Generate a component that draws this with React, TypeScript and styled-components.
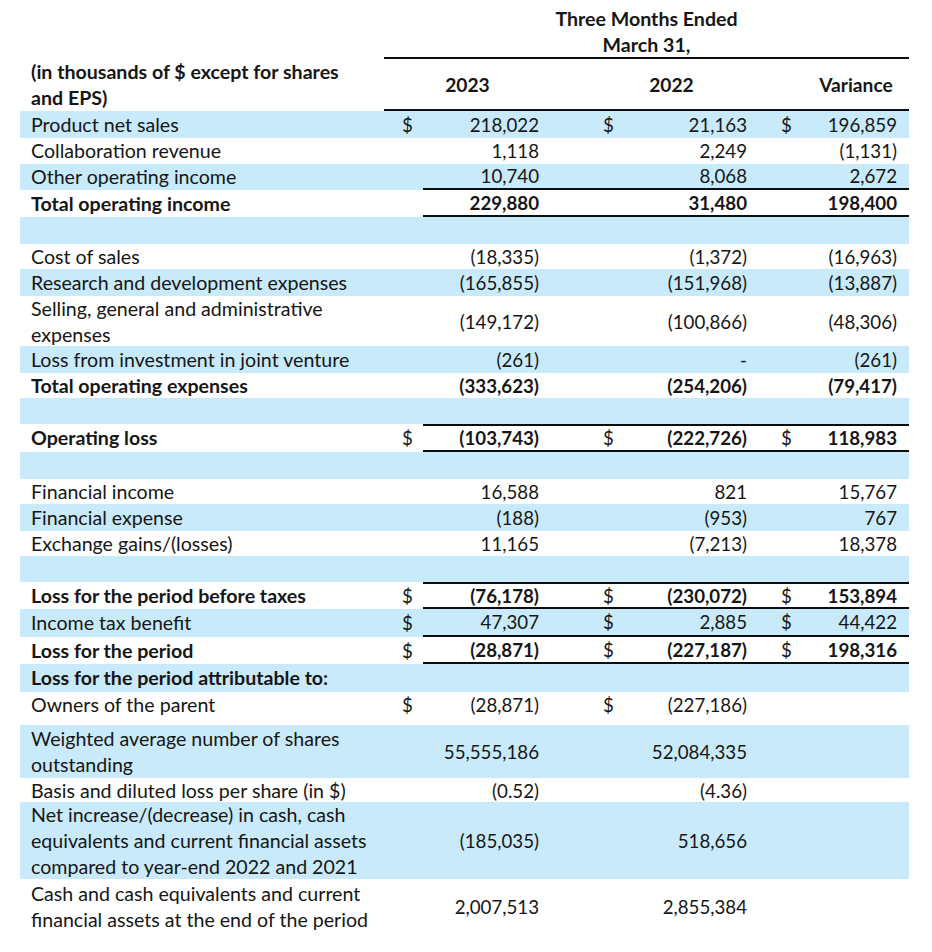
import React from "react";
import styled, { createGlobalStyle } from "styled-components";

const GlobalStyle = createGlobalStyle`
  html, body { margin: 0; padding: 0; background: #ffffff; }
  body {
    font-family: Lato, "Open Sans", "Liberation Sans", sans-serif;
    font-size: 19.6px;
    color: #161616;
  }
`;

const BLUE = "#c8eafa";
const LINE = "2px solid #0d0d0d";

const Sheet = styled.div`
  padding-left: 20px;
  width: 889px;
`;

const TitleRow = styled.div`
  display: grid;
  grid-template-columns: 364px 525px;
  height: 57px;
`;

const Title = styled.div`
  grid-column: 2;
  text-align: center;
  font-weight: 700;
  line-height: 26px;
  padding-top: 6px;
`;

const HeadRow = styled.div`
  display: grid;
  grid-template-columns: 364px 525px;
  height: 54px;
`;

const HeadLabel = styled.div`
  font-weight: 700;
  line-height: 26px;
  padding: 2px 0 0 11px;
  white-space: nowrap;
`;

const HeadBand = styled.div`
  display: grid;
  grid-template-columns: 167px 33px 175px 44px 106px;
  border-top: ${LINE};
  border-bottom: ${LINE};
  align-items: center;
`;

const HeadYear = styled.div<{ $col: number }>`
  grid-column: ${(p) => p.$col};
  text-align: center;
  font-weight: 700;
  font-size: 19.2px;
`;

const Row = styled.div<{ $blue?: boolean; $h: number; $bold?: boolean; $pb?: number }>`
  display: grid;
  grid-template-columns: 364px 39px 486px;
  height: ${(p) => p.$h}px;
  background: ${(p) => (p.$blue ? BLUE : "#ffffff")};
  font-weight: ${(p) => (p.$bold ? 700 : 400)};
  padding-bottom: ${(p) => p.$pb ?? 0}px;
  box-sizing: border-box;
`;

const Label = styled.div`
  display: flex;
  flex-direction: column;
  justify-content: center;
  padding-left: 11px;
  line-height: 26px;
  white-space: nowrap;
`;

const Dollar = styled.div<{ $pad?: number }>`
  display: flex;
  align-items: center;
  padding-left: ${(p) => p.$pad ?? 18}px;
  font-weight: 400;
  font-size: 18.7px;
`;

const Figures = styled.div<{ $top?: boolean; $bottom?: boolean }>`
  display: grid;
  grid-template-columns: 128px 33px 39px 136px 44px 106px;
  border-top: ${(p) => (p.$top ? LINE : "none")};
  border-bottom: ${(p) => (p.$bottom ? LINE : "none")};
  box-sizing: border-box;
`;

const Num = styled.div`
  display: flex;
  align-items: center;
  justify-content: flex-end;
  padding-right: 12px;
  white-space: nowrap;
  font-size: 18.7px;
`;

const Gap = styled.div``;

type Line = {
  label?: string[];
  blue?: boolean;
  bold?: boolean;
  h: number;
  pb?: number;
  dollars?: [boolean, boolean, boolean];
  vals?: [string, string, string];
  top?: boolean;
  bottom?: boolean;
};

const D3: [boolean, boolean, boolean] = [true, true, true];

const rows: Line[] = [
  { label: ["Product net sales"], blue: true, h: 27, dollars: D3, vals: ["218,022", "21,163", "196,859"] },
  { label: ["Collaboration revenue"], h: 26, vals: ["1,118", "2,249", "(1,131)"] },
  { label: ["Other operating income"], blue: true, h: 26, vals: ["10,740", "8,068", "2,672"], bottom: true },
  { label: ["Total operating income"], bold: true, h: 27, vals: ["229,880", "31,480", "198,400"], bottom: true },
  { blue: true, h: 27 },
  { label: ["Cost of sales"], h: 25, vals: ["(18,335)", "(1,372)", "(16,963)"] },
  { label: ["Research and development expenses"], blue: true, h: 27, vals: ["(165,855)", "(151,968)", "(13,887)"] },
  { label: ["Selling, general and administrative", "expenses"], h: 50, vals: ["(149,172)", "(100,866)", "(48,306)"] },
  { label: ["Loss from investment in joint venture"], blue: true, h: 27, vals: ["(261)", "-", "(261)"] },
  { label: ["Total operating expenses"], bold: true, h: 25, vals: ["(333,623)", "(254,206)", "(79,417)"] },
  { blue: true, h: 26 },
  { label: ["Operating loss"], bold: true, h: 28, dollars: D3, vals: ["(103,743)", "(222,726)", "118,983"], top: true, bottom: true },
  { blue: true, h: 27 },
  { label: ["Financial income"], h: 25, vals: ["16,588", "821", "15,767"] },
  { label: ["Financial expense"], blue: true, h: 27, vals: ["(188)", "(953)", "767"] },
  { label: ["Exchange gains/(losses)"], h: 25, vals: ["11,165", "(7,213)", "18,378"] },
  { blue: true, h: 26 },
  { label: ["Loss for the period before taxes"], bold: true, h: 27, dollars: D3, vals: ["(76,178)", "(230,072)", "153,894"], top: true, bottom: true },
  { label: ["Income tax benefit"], blue: true, h: 28, dollars: D3, vals: ["47,307", "2,885", "44,422"], bottom: true },
  { label: ["Loss for the period"], bold: true, h: 27, dollars: D3, vals: ["(28,871)", "(227,187)", "198,316"], bottom: true },
  { label: ["Loss for the period attributable to:"], bold: true, blue: true, h: 28 },
  { label: ["Owners of the parent"], h: 33, pb: 7, dollars: [true, true, false], vals: ["(28,871)", "(227,186)", ""] },
  { label: ["Weighted average number of shares", "outstanding"], blue: true, h: 53, vals: ["55,555,186", "52,084,335", ""] },
  { label: ["Basis and diluted loss per share (in $)"], h: 24, vals: ["(0.52)", "(4.36)", ""] },
  {
    label: ["Net increase/(decrease) in cash, cash", "equivalents and current financial assets", "compared to year-end 2022 and 2021"],
    blue: true,
    h: 77,
    vals: ["(185,035)", "518,656", ""],
  },
  { label: ["Cash and cash equivalents and current", "financial assets at the end of the period"], h: 56, vals: ["2,007,513", "2,855,384", ""] },
];

export default function App() {
  return (
    <>
      <GlobalStyle />
      <Sheet>
        <TitleRow>
          <Title>
            Three Months Ended
            <br />
            March 31,
          </Title>
        </TitleRow>
        <HeadRow>
          <HeadLabel>
            (in thousands of $ except for shares
            <br />
            and EPS)
          </HeadLabel>
          <HeadBand>
            <HeadYear $col={1}>2023</HeadYear>
            <HeadYear $col={3}>2022</HeadYear>
            <HeadYear $col={5}>Variance</HeadYear>
          </HeadBand>
        </HeadRow>
        {rows.map((r, i) => {
          const d = r.dollars ?? [false, false, false];
          const v = r.vals ?? ["", "", ""];
          return (
            <Row key={i} $blue={r.blue} $h={r.h} $bold={r.bold} $pb={r.pb}>
              <Label>
                {(r.label ?? []).map((l, j) => (
                  <span key={j}>{l}</span>
                ))}
              </Label>
              <Dollar>{d[0] ? "$" : ""}</Dollar>
              <Figures $top={r.top} $bottom={r.bottom}>
                <Num>{v[0]}</Num>
                <Gap />
                <Dollar $pad={19}>{d[1] ? "$" : ""}</Dollar>
                <Num>{v[1]}</Num>
                <Dollar $pad={22}>{d[2] ? "$" : ""}</Dollar>
                <Num>{v[2]}</Num>
              </Figures>
            </Row>
          );
        })}
      </Sheet>
    </>
  );
}
